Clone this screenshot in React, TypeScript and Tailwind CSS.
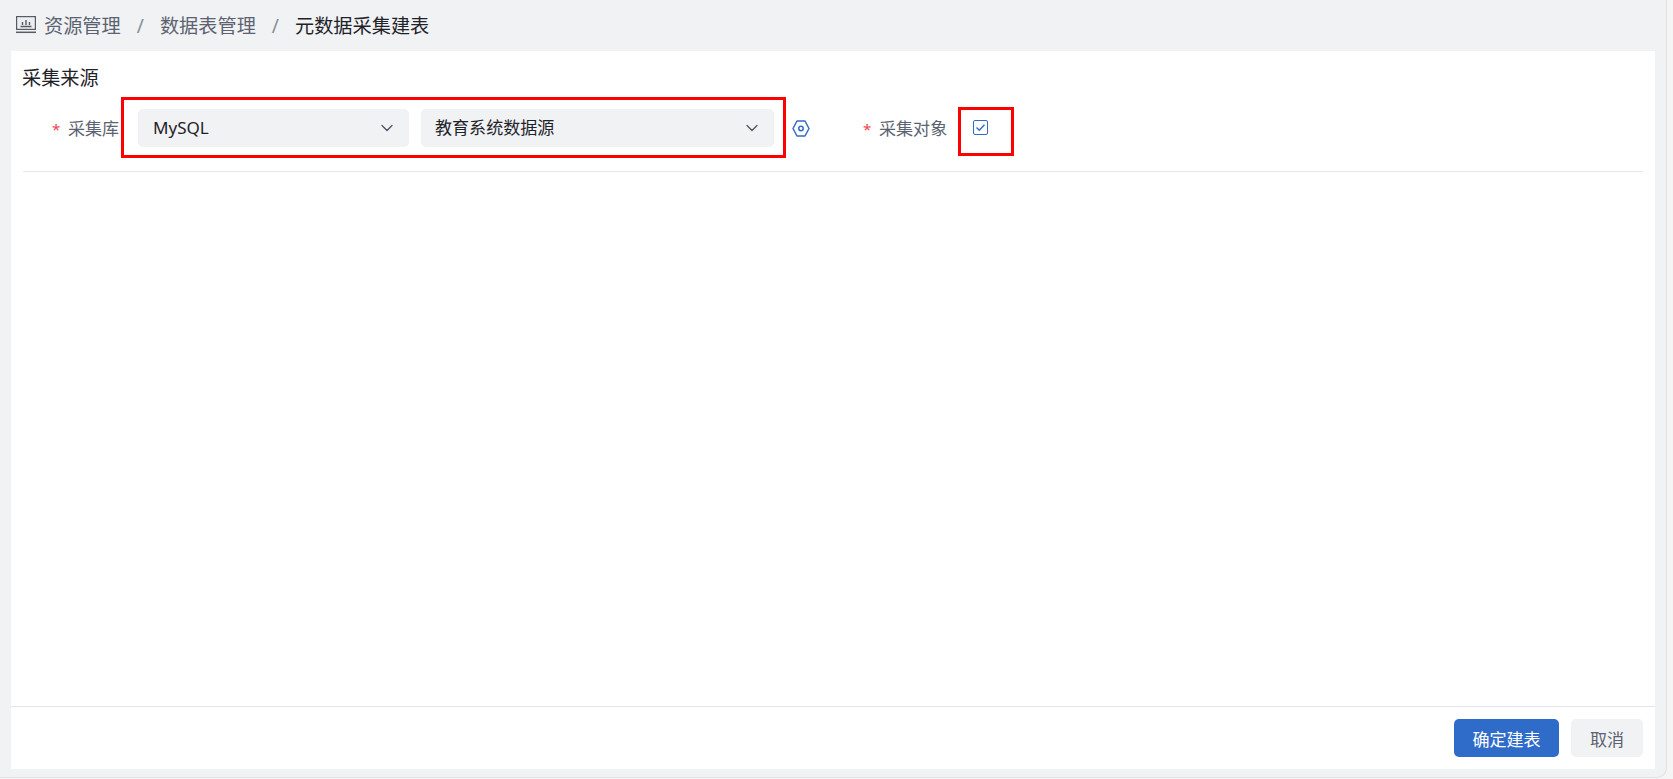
import React from "react";
import { ChevronDown } from "lucide-react";

export default function App() {
  return (
    <div className="h-[779px] w-full overflow-hidden bg-[#f5f5f6] font-['Noto_Sans','Noto_Sans_CJK_SC',sans-serif]">
      <div className="flex h-[778px] w-[1667px] flex-col rounded-br-[10px] border-r border-b border-[#e2e2e4] bg-[#f1f2f4] pb-[8px] pl-[11px] pr-[11px]">
        <div className="flex h-[51px] shrink-0 items-center pt-[2px] text-[19.2px] text-[#5b6270]">
          <svg width="20" height="18" viewBox="0 0 20 18" fill="none" className="mb-[3px] ml-[5px] mr-[8px] text-[#555c68]">
            <rect x="0.6" y="0.6" width="18.8" height="12.8" stroke="currentColor" strokeWidth="1.2" fill="#eceef0" />
            <path d="M0 16.3h20" stroke="currentColor" strokeWidth="1.5" />
            <path d="M4.5 10.5h11M10 4v5M6.5 6v3M13.5 6v3" stroke="currentColor" strokeWidth="1.4" />
          </svg>
          <span>资源管理</span>
          <span className="mx-[16px] text-[#8a8f98]">/</span>
          <span>数据表管理</span>
          <span className="mx-[16px] text-[#8a8f98]">/</span>
          <span className="text-[#1f2329]">元数据采集建表</span>
        </div>
        <div className="flex min-h-0 flex-1 flex-col bg-white">
          <div className="flex-1 px-[12px]">
            <div className="-ml-[1px] flex h-[46px] items-center pt-[8px] text-[19.2px] leading-none text-[#1f2329]">采集来源</div>
            <div className="flex h-[75px] items-start border-b border-[#e5e6e8]">
              <div className="flex h-[61px] w-[86px] items-center pl-[29px] pt-[2px] text-[17.07px] text-[#5b6270]">
                <span className="w-[16px] shrink-0 pt-[1px] text-[15px] text-[#f0434f]">*</span>
                <span className="shrink-0">采集库</span>
              </div>
              <div className="ml-[12px] flex h-[61px] w-[665px] items-center gap-[12px] border-[3px] border-[#ff0000] pl-[14px]">
                <div className="flex h-[38px] w-[271px] items-center justify-between rounded-[5px] bg-[#f1f2f4] pl-[15px] pr-[12px] text-[17.07px] text-[#1f2329]">
                  <span>MySQL</span>
                  <ChevronDown size={20} strokeWidth={1.5} className="text-[#4b5260]" />
                </div>
                <div className="flex h-[38px] w-[353px] items-center justify-between rounded-[5px] bg-[#f1f2f4] pl-[14px] pr-[12px] text-[17.07px] text-[#1f2329]">
                  <span>教育系统数据源</span>
                  <ChevronDown size={20} strokeWidth={1.5} className="text-[#4b5260]" />
                </div>
              </div>
              <div className="ml-[6px] flex h-[61px] items-center pt-[1px]">
                <svg width="18" height="17" viewBox="0 0 18 17" fill="none" className="text-[#2f6bc9]">
                  <path d="M5 1h8l4 7.5L13 16H5L1 8.5z" stroke="currentColor" strokeWidth="1.5" strokeLinejoin="round" />
                  <circle cx="9" cy="8.5" r="2.2" stroke="currentColor" strokeWidth="1.5" />
                </svg>
              </div>
              <div className="ml-[53px] mt-[10px] flex h-[49px] items-center pb-[6px] text-[17.07px] text-[#5b6270]">
                <span className="w-[16px] shrink-0 pt-[1px] text-[15px] text-[#f0434f]">*</span>
                <span>采集对象</span>
              </div>
              <div className="ml-[11px] mt-[10px] flex h-[49px] w-[56px] items-start border-[3px] border-[#ff0000] pl-[12px] pt-[10px]">
                <div className="flex h-[15px] w-[15px] items-center justify-center rounded-[2px] border-[1.5px] border-[#2f6bc9]">
                  <svg width="11" height="9" viewBox="0 0 11 9" fill="none">
                    <path d="M1.5 4.5l2.8 2.7 5.2-5.4" stroke="#2f6bc9" strokeWidth="1.4" />
                  </svg>
                </div>
              </div>
            </div>
          </div>
          <div className="flex h-[63px] shrink-0 items-start justify-end gap-[12px] border-t border-[#e5e3ee] pr-[12px] pt-[12px]">
            <button className="h-[38px] w-[105px] rounded-[5px] bg-[#2f6bc9] pt-[3px] text-[17.07px] text-white">确定建表</button>
            <button className="h-[38px] w-[72px] rounded-[5px] bg-[#f1f2f4] pt-[3px] text-[17.07px] text-[#5b6270]">取消</button>
          </div>
        </div>
      </div>
    </div>
  );
}
